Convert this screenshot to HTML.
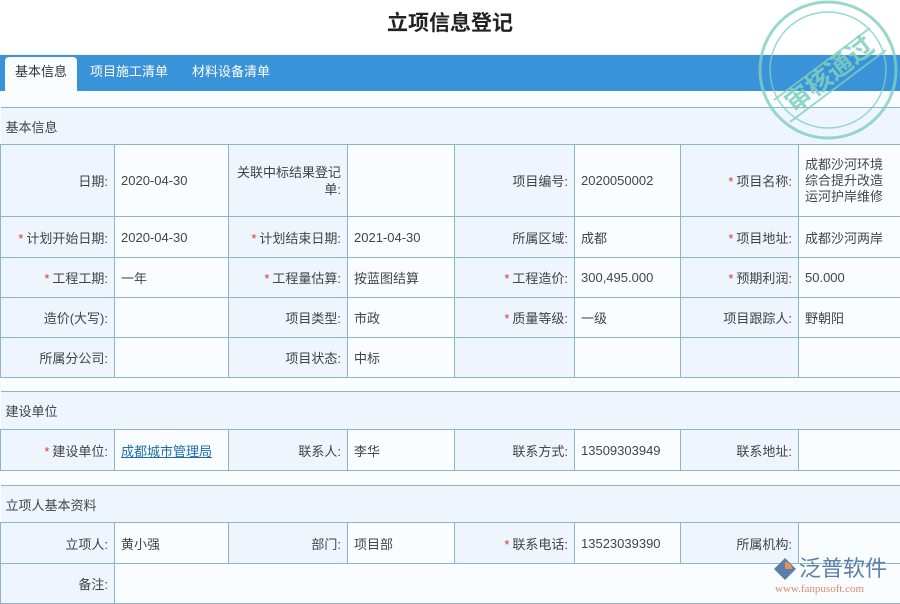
<!DOCTYPE html><html><head><meta charset="utf-8"><style>
*{margin:0;padding:0;box-sizing:border-box}
body{width:900px;height:600px;overflow:hidden;background:#fafdff;font-family:"Liberation Sans","Noto Sans CJK SC",sans-serif;font-size:13px;color:#444;position:relative}
.title{position:absolute;top:0;left:0;width:900px;height:55px;background:#fff;text-align:center;font-size:21px;font-weight:bold;line-height:48px;color:#222}
.tabs{position:absolute;top:55px;left:0;width:900px;height:36px;background:#3a93d8}
.tab{position:absolute;top:0;height:36px;line-height:34px;color:#fff;font-size:13px}
.tab.a{background:#fafdff;color:#333;top:2px;height:34px;left:5px;width:72px;text-align:center;border-radius:4px 4px 0 0;line-height:30px}
table{position:absolute;left:0;width:900px;border-collapse:collapse;table-layout:fixed}
td{border:1px solid #8fb3c8;padding:0 6px;vertical-align:middle;overflow:hidden}
td.l{background:#eef5fd;text-align:right;padding-right:6px}
td.v{background:#fafdff}
td.s{background:#eef5fd;border-left:none;border-right:none;padding-left:5px}
.r{color:#d33;margin-right:3px}
a{color:#1d6ea8;text-decoration:underline}
</style></head><body>
<div class="title">立项信息登记</div>
<div class="tabs"><div class="tab a">基本信息</div><div class="tab" style="left:90px">项目施工清单</div><div class="tab" style="left:192px">材料设备清单</div></div>
<table style="top:107px">
<colgroup><col style="width:114px"><col style="width:114px"><col style="width:119px"><col style="width:107px"><col style="width:120px"><col style="width:106px"><col style="width:118px"><col style="width:102px"></colgroup>
<tr style="height:37px"><td class="s" colspan="8">基本信息</td></tr>
<tr style="height:72px"><td class="l">日期:</td><td class="v">2020-04-30</td><td class="l" style="line-height:17px">关联中标结果登记单:</td><td class="v"></td><td class="l">项目编号:</td><td class="v">2020050002</td><td class="l"><span class="r">*</span>项目名称:</td><td class="v" style="line-height:16px;padding-right:12px">成都沙河环境综合提升改造运河护岸维修</td></tr>
<tr style="height:41px"><td class="l"><span class="r">*</span>计划开始日期:</td><td class="v">2020-04-30</td><td class="l"><span class="r">*</span>计划结束日期:</td><td class="v">2021-04-30</td><td class="l">所属区域:</td><td class="v">成都</td><td class="l"><span class="r">*</span>项目地址:</td><td class="v">成都沙河两岸</td></tr>
<tr style="height:40px"><td class="l"><span class="r">*</span>工程工期:</td><td class="v">一年</td><td class="l"><span class="r">*</span>工程量估算:</td><td class="v">按蓝图结算</td><td class="l"><span class="r">*</span>工程造价:</td><td class="v">300,495.000</td><td class="l"><span class="r">*</span>预期利润:</td><td class="v">50.000</td></tr>
<tr style="height:40px"><td class="l">造价(大写):</td><td class="v"></td><td class="l">项目类型:</td><td class="v">市政</td><td class="l"><span class="r">*</span>质量等级:</td><td class="v">一级</td><td class="l">项目跟踪人:</td><td class="v">野朝阳</td></tr>
<tr style="height:40px"><td class="l">所属分公司:</td><td class="v"></td><td class="l">项目状态:</td><td class="v">中标</td><td class="l"></td><td class="v"></td><td class="l"></td><td class="v"></td></tr>
</table>
<table style="top:391px">
<colgroup><col style="width:114px"><col style="width:114px"><col style="width:119px"><col style="width:107px"><col style="width:120px"><col style="width:106px"><col style="width:118px"><col style="width:102px"></colgroup>
<tr style="height:38px"><td class="s" colspan="8">建设单位</td></tr>
<tr style="height:41px"><td class="l"><span class="r">*</span>建设单位:</td><td class="v"><a>成都城市管理局</a></td><td class="l">联系人:</td><td class="v">李华</td><td class="l">联系方式:</td><td class="v">13509303949</td><td class="l">联系地址:</td><td class="v"></td></tr>
</table>
<table style="top:485px">
<colgroup><col style="width:114px"><col style="width:114px"><col style="width:119px"><col style="width:107px"><col style="width:120px"><col style="width:106px"><col style="width:118px"><col style="width:102px"></colgroup>
<tr style="height:37px"><td class="s" colspan="8">立项人基本资料</td></tr>
<tr style="height:41px"><td class="l">立项人:</td><td class="v">黄小强</td><td class="l">部门:</td><td class="v">项目部</td><td class="l"><span class="r">*</span>联系电话:</td><td class="v">13523039390</td><td class="l">所属机构:</td><td class="v"></td></tr>
<tr style="height:40px"><td class="l">备注:</td><td class="v" colspan="7"></td></tr>
</table>
<svg style="position:absolute;left:752px;top:0" width="148" height="148" viewBox="0 0 148 148">
<g fill="none" stroke="#7fcfbf" opacity="0.8">
<circle cx="76" cy="70" r="68" stroke-width="3"/><circle cx="76" cy="70" r="58" stroke-width="1.5"/>
<line x1="22" y1="100" x2="118" y2="28" stroke-width="2"/><line x1="38" y1="122" x2="134" y2="50" stroke-width="2"/>
</g>
<text x="78" y="83" text-anchor="middle" font-size="26" font-weight="bold" fill="#7fcfbf" opacity="0.85" transform="rotate(-38 78 75)" font-family="Noto Sans CJK SC,sans-serif">审核通过</text>
</svg>
<div style="position:absolute;left:772px;top:552px;width:120px;height:48px">
<svg width="26" height="26" style="position:absolute;left:0;top:4px" viewBox="0 0 26 26"><path d="M13 2 L24 13 L13 24 L2 13Z" fill="#5b7fa8"/><path d="M13 6 A7 7 0 0 1 20 13 L13 13Z" fill="#e8905a"/></svg>
<div style="position:absolute;left:27px;top:0;font-size:22px;color:#5b7fa8;font-family:'Noto Sans CJK SC',sans-serif;line-height:30px">泛普软件</div>
<div style="position:absolute;left:3px;top:31px;font-size:11px;color:#d88a6a;font-family:'Liberation Serif',serif">www.fanpusoft.com</div>
</div>
</body></html>
